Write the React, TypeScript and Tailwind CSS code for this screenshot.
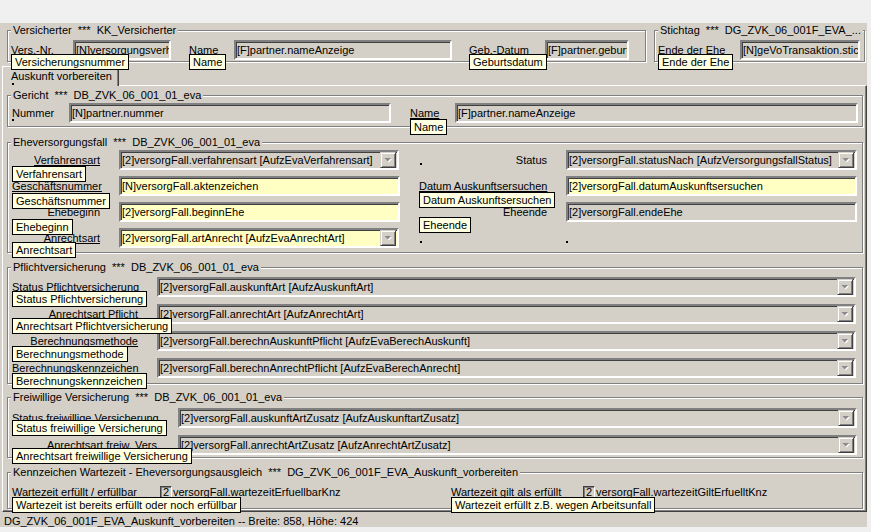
import React from 'react';

const Tip = ({ text, pos }: { text: string; pos: string }) => (
  <div className={`absolute left-0 z-20 whitespace-nowrap border border-black bg-[#ffffe1] px-[3px] leading-[14px] ${pos}`}>
    {text}
  </div>
);

const Dot = ({ cls = '' }: { cls?: string }) => <span className={`block h-[2px] w-[2px] bg-black ${cls}`} />;

type LabelProps = {
  text: string;
  w: string;
  right?: boolean;
  line?: boolean;
  tip?: string;
  tipPos?: string;
  children?: React.ReactNode;
};

const Label = ({ text, w, right, line, tip, tipPos = 'top-[14px]', children }: LabelProps) => (
  <div className={`relative flex h-[20px] shrink-0 items-center whitespace-nowrap ${right ? 'justify-end' : ''} ${w}`}>
    <span className={line ? 'underline underline-offset-[1px]' : ''}>{text}</span>
    {children}
    {tip && <Tip text={tip} pos={tipPos} />}
  </div>
);

const sunken =
  'h-[20px] shrink-0 border-2 border-t-[#808080] border-l-[#808080] border-b-white border-r-white shadow-[inset_1px_1px_0_#404040]';

const Field = ({ w, value, yellow }: { w: string; value: string; yellow?: boolean }) => (
  <div className={`${sunken} ${w} ${yellow ? 'bg-[#ffffc4]' : 'bg-[#d4d0c8]'} overflow-hidden whitespace-nowrap pl-[1px] leading-[16px]`}>
    {value}
  </div>
);

const DropBtn = () => (
  <div className="mr-[1px] flex h-[16px] w-[16px] shrink-0 items-center justify-center border border-t-[#d4d0c8] border-l-[#d4d0c8] border-b-[#404040] border-r-[#404040] bg-[#d4d0c8] shadow-[inset_1px_1px_0_#fff,inset_-1px_-1px_0_#808080]">
    <svg width="8" height="6" viewBox="0 0 8 6">
      <polygon points="1.5,2 8,2 4.75,5.5" fill="#fff" />
      <polygon points="0.5,1 7,1 3.75,4.5" fill="#8a8a8a" />
    </svg>
  </div>
);

const Combo = ({ w, value, yellow }: { w: string; value: string; yellow?: boolean }) => (
  <div className={`${sunken} ${w} ${yellow ? 'bg-[#ffffc4]' : 'bg-[#d4d0c8]'} flex items-center`}>
    <span className="min-w-0 flex-1 overflow-hidden whitespace-nowrap pl-[1px] leading-[16px]">{value}</span>
    <DropBtn />
  </div>
);

const Check = ({ text }: { text: string }) => (
  <div className="flex h-[20px] items-center whitespace-nowrap">
    <span className="flex h-[12px] w-[12px] items-center justify-center border border-t-[#404040] border-l-[#404040] border-b-white border-r-white bg-[#d4d0c8] text-[11px] leading-[10px] shadow-[inset_1px_1px_0_#808080]">
      2
    </span>
    <span className="ml-[1px]">{text}</span>
  </div>
);

const Group = ({ title, cls, children }: { title: string; cls: string; children: React.ReactNode }) => (
  <div className={`relative shrink-0 border border-[#808080] shadow-[1px_1px_0_#fff,inset_1px_1px_0_#fff] ${cls}`}>
    <span className="absolute -top-[8px] left-[3px] whitespace-pre bg-[#d4d0c8] px-[2px] leading-[14px]">{title}</span>
    {children}
  </div>
);

const Row = ({ children, cls = '' }: { children: React.ReactNode; cls?: string }) => (
  <div className={`flex h-[20px] items-center ${cls}`}>{children}</div>
);

export default function App() {
  return (
    <div className="h-[532px] w-[871px] overflow-hidden bg-[#f0f0f0] font-['Liberation_Sans',Arial,sans-serif] text-[11px] text-black">
      <div className="h-[23px]" />
      <div className="h-[504px] w-[867px] bg-[#d4d0c8]">
        {/* Kopfbereich */}
        <div className="flex items-start pl-[7px] pt-[7px]">
          <Group title="Versicherter  ***  KK_Versicherter" cls="h-[32px] w-[639px] pl-[3px] pt-[9px]">
            <Row>
              <Label text="Vers.-Nr." w="w-[62px]" line tip="Versicherungsnummer" />
              <Field w="w-[98px]" value="[N]versorgungsverhaeltnis" />
              <div className="w-[18px]" />
              <Label text="Name" w="w-[45px]" line tip="Name" />
              <Field w="w-[218px]" value="[F]partner.nameAnzeige" />
              <div className="w-[17px]" />
              <Label text="Geb.-Datum" w="w-[76px]" line tip="Geburtsdatum" />
              <Field w="w-[84px]" value="[F]partner.geburtsdatum" />
            </Row>
          </Group>
          <Group title="Stichtag  ***  DG_ZVK_06_001F_EVA_..." cls="ml-[8px] h-[32px] w-[211px] pl-[3px] pt-[9px]">
            <Row>
              <Label text="Ende der Ehe" w="w-[82px]" line tip="Ende der Ehe" />
              <Field w="w-[120px]" value="[N]geVoTransaktion.stichtag" />
            </Row>
          </Group>
        </div>

        {/* Reiter */}
        <div className="relative z-10 -mb-[1px] ml-[2px] mt-[4px] flex h-[20px] w-[117px] items-center border-l border-t border-r border-l-white border-t-white border-r-[#404040] bg-[#d4d0c8] pl-[8px] shadow-[inset_-1px_0_0_#808080]">
          <span className="whitespace-nowrap">Auskunft vorbereiten</span>
          <Dot cls="absolute bottom-[1px] left-[9px]" />
        </div>

        {/* Hauptbereich */}
        <div className="ml-[2px] flex h-[427px] w-[865px] flex-col border border-t-white border-l-white border-b-[#404040] border-r-[#404040] px-[4px] shadow-[inset_-1px_-1px_0_#808080]">
          <Group title="Gericht  ***  DB_ZVK_06_001_01_eva" cls="mt-[9px] h-[32px] w-[856px] pl-[4px] pt-[7px]">
            <Row>
              <Label text="Nummer" w="w-[57px]">
                <Dot cls="absolute left-0 top-[16px]" />
              </Label>
              <Field w="w-[322px]" value="[N]partner.nummer" />
              <div className="w-[19px]" />
              <Label text="Name" w="w-[45px]" line tip="Name" tipPos="top-[16px]" />
              <Field w="w-[403px]" value="[F]partner.nameAnzeige" />
            </Row>
          </Group>

          <Group title="Eheversorgungsfall  ***  DB_ZVK_06_001_01_eva" cls="mt-[15px] h-[111px] w-[856px] pl-[4px] pt-[7px]">
            <div className="flex flex-col gap-[6px]">
              <Row>
                <Label text="Verfahrensart" w="w-[88px]" right line tip="Verfahrensart" tipPos="top-[16px]" />
                <div className="w-[19px]" />
                <Combo w="w-[280px]" value="[2]versorgFall.verfahrensart [AufzEvaVerfahrensart]" />
                <div className="w-[20px]" />
                <Label text="Status" w="w-[128px]" right>
                  <Dot cls="absolute left-[1px] top-[13px]" />
                </Label>
                <div className="w-[19px]" />
                <Combo w="w-[291px]" value="[2]versorgFall.statusNach [AufzVersorgungsfallStatus]" />
              </Row>
              <Row>
                <Label text="Geschäftsnummer" w="w-[88px]" line tip="Geschäftsnummer" tipPos="top-[17px]" />
                <div className="w-[19px]" />
                <Field w="w-[281px]" value="[N]versorgFall.aktenzeichen" yellow />
                <div className="w-[19px]" />
                <Label text="Datum Auskunftsersuchen" w="w-[128px]" line tip="Datum Auskunftsersuchen" tipPos="top-[16px]" />
                <div className="w-[19px]" />
                <Field w="w-[291px]" value="[2]versorgFall.datumAuskunftsersuchen" yellow />
              </Row>
              <Row>
                <Label text="Ehebeginn" w="w-[88px]" right tip="Ehebeginn" tipPos="top-[17px]" />
                <div className="w-[19px]" />
                <Field w="w-[281px]" value="[2]versorgFall.beginnEhe" yellow />
                <div className="w-[19px]" />
                <Label text="Eheende" w="w-[128px]" right tip="Eheende" tipPos="top-[15px]" />
                <div className="w-[19px]" />
                <Field w="w-[291px]" value="[2]versorgFall.endeEhe" />
              </Row>
              <Row>
                <Label text="Anrechtsart" w="w-[88px]" right line tip="Anrechtsart" tipPos="top-[14px]" />
                <div className="w-[19px]" />
                <Combo w="w-[280px]" value="[2]versorgFall.artAnrecht [AufzEvaAnrechtArt]" yellow />
                <div className="w-[20px]" />
                <Label text="" w="w-[128px]">
                  <Dot cls="absolute left-[1px] top-[13px]" />
                </Label>
                <div className="w-[19px]" />
                <div className="relative h-[20px] w-[291px]">
                  <Dot cls="absolute left-0 top-[13px]" />
                </div>
              </Row>
            </div>
          </Group>

          <Group title="Pflichtversicherung  ***  DB_ZVK_06_001_01_eva" cls="mt-[14px] h-[117px] w-[856px] pl-[4px] pt-[9px]">
            <div className="flex flex-col gap-[7px]">
              <Row>
                <Label text="Status Pflichtversicherung" w="w-[126px]" line tip="Status Pflichtversicherung" tipPos="top-[14px]" />
                <div className="w-[19px]" />
                <Combo w="w-[699px]" value="[2]versorgFall.auskunftArt [AufzAuskunftArt]" />
              </Row>
              <Row>
                <Label text="Anrechtsart Pflicht" w="w-[126px]" right line tip="Anrechtsart Pflichtversicherung" tipPos="top-[14px]" />
                <div className="w-[19px]" />
                <Combo w="w-[699px]" value="[2]versorgFall.anrechtArt [AufzAnrechtArt]" />
              </Row>
              <Row>
                <Label text="Berechnungsmethode" w="w-[126px]" right line tip="Berechnungsmethode" tipPos="top-[15px]" />
                <div className="w-[19px]" />
                <Combo w="w-[699px]" value="[2]versorgFall.berechnAuskunftPflicht [AufzEvaBerechAuskunft]" />
              </Row>
              <Row>
                <Label text="Berechnungskennzeichen" w="w-[126px]" line tip="Berechnungskennzeichen" tipPos="top-[15px]" />
                <div className="w-[19px]" />
                <Combo w="w-[699px]" value="[2]versorgFall.berechnAnrechtPflicht [AufzEvaBerechAnrecht]" />
              </Row>
            </div>
          </Group>

          <Group title="Freiwillige Versicherung  ***  DB_ZVK_06_001_01_eva" cls="mt-[13px] h-[61px] w-[856px] pl-[4px] pt-[10px]">
            <div className="flex flex-col gap-[7px]">
              <Row>
                <Label text="Status freiwillige Versicherung" w="w-[148px]" line tip="Status freiwillige Versicherung" tipPos="top-[12px]" />
                <div className="w-[18px]" />
                <Combo w="w-[679px]" value="[2]versorgFall.auskunftArtZusatz [AufzAuskunftartZusatz]" />
              </Row>
              <Row>
                <Label text="Anrechtsart freiw. Vers." w="w-[148px]" right line tip="Anrechtsart freiwillige Versicherung" tipPos="top-[13px]" />
                <div className="w-[18px]" />
                <Combo w="w-[679px]" value="[2]versorgFall.anrechtArtZusatz [AufzAnrechtArtZusatz]" />
              </Row>
            </div>
          </Group>

          <Group title="Kennzeichen Wartezeit - Eheversorgungsausgleich  ***  DG_ZVK_06_001F_EVA_Auskunft_vorbereiten" cls="mt-[14px] h-[37px] w-[856px] pl-[4px] pt-[9px]">
            <Row>
              <Label text="Wartezeit erfüllt / erfüllbar" w="w-[148px]" line tip="Wartezeit ist bereits erfüllt oder noch erfüllbar" tipPos="top-[15px]" />
              <div className="w-[291px] shrink-0">
                <Check text="versorgFall.wartezeitErfuellbarKnz" />
              </div>
              <Label text="Wartezeit gilt als erfüllt" w="w-[132px]" line tip="Wartezeit erfüllt z.B. wegen Arbeitsunfall" tipPos="top-[15px]" />
              <Check text="versorgFall.wartezeitGiltErfuelltKnz" />
            </Row>
          </Group>
        </div>

        <div className="mt-[2px] whitespace-nowrap pl-[4px] leading-[14px]">
          DG_ZVK_06_001F_EVA_Auskunft_vorbereiten -- Breite: 858, Höhe: 424
        </div>
      </div>
    </div>
  );
}
